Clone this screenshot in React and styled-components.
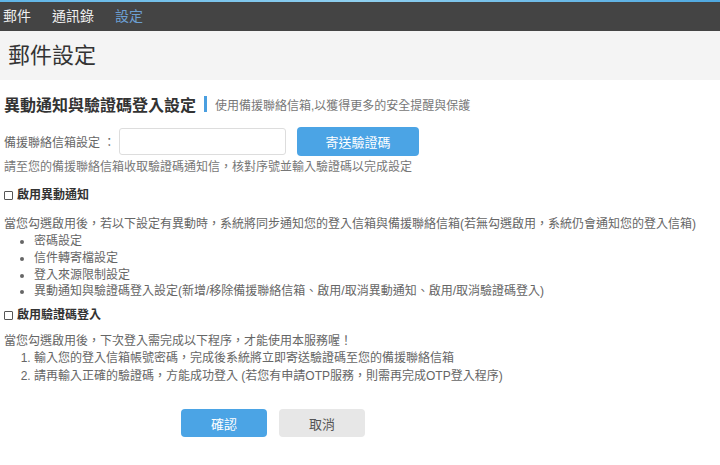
import React from "react";
import styled, { createGlobalStyle } from "styled-components";

const Global = createGlobalStyle`
  html, body { margin: 0; padding: 0; background: #fff; }
  body { font-family: "Liberation Sans", "Noto Sans CJK TC", Arial, sans-serif; color: #555; }
  * { box-sizing: border-box; }
`;

const Page = styled.div`
  width: 720px;
  min-height: 465px;
  display: flex;
  flex-direction: column;
`;

const TopLine = styled.div`
  height: 2px;
  background: linear-gradient(90deg, #5fb4e6 0%, #8fd0f0 50%, #4fa8e0 100%);
`;

const NavBar = styled.nav`
  height: 29px;
  background: #444;
  display: flex;
  align-items: center;
  gap: 21px;
  padding-left: 3px;
`;

const NavItem = styled.a`
  font-size: 14px;
  color: ${(p) => (p.$active ? "#6c9fd2" : "#f0f0f0")};
  text-decoration: none;
  line-height: 29px;
`;

const TitleBand = styled.header`
  height: 49px;
  background: #f4f4f4;
  display: flex;
  align-items: center;
  padding-left: 8px;
`;

const Title = styled.h1`
  margin: 0;
  font-size: 22px;
  font-weight: normal;
  color: #333;
  line-height: 1;
  padding-top: 1px;
`;

const Content = styled.main`
  padding: 14px 0 0 4px;
  display: flex;
  flex-direction: column;
`;

const Heading = styled.div`
  display: flex;
  align-items: center;
  height: 20px;
`;

const HeadingText = styled.h2`
  margin: 0;
  font-size: 16px;
  font-weight: bold;
  color: #333;
`;

const Bar = styled.span`
  width: 3px;
  height: 16px;
  background: #4a9fe0;
  margin: 0 8px 0 8px;
`;

const SubTitle = styled.span`
  font-size: 12px;
  color: #777;
`;

const FormRow = styled.div`
  margin-top: 13px;
  display: flex;
  align-items: center;
  height: 29px;
`;

const Label = styled.label`
  font-size: 12px;
  color: #666;
  width: 115px;
`;

const TextInput = styled.input`
  width: 167px;
  height: 27px;
  border: 1px solid #ddd;
  border-radius: 3px;
  margin-right: 11px;
  outline: none;
`;

const Button = styled.button`
  width: ${(p) => p.$w || 86}px;
  height: ${(p) => p.$h || 28}px;
  border: none;
  border-radius: 4px;
  background: ${(p) => (p.$primary ? "#4ba4e5" : "#e7e7e7")};
  color: ${(p) => (p.$primary ? "#fff" : "#555")};
  font-family: inherit;
  font-size: 13px;
  cursor: pointer;
`;

const Hint = styled.p`
  margin: 3px 0 0;
  font-size: 12px;
  line-height: 17px;
  color: #777;
`;

const CheckRow = styled.label`
  display: flex;
  align-items: center;
  margin-top: ${(p) => p.$mt}px;
  font-size: 12px;
  line-height: 17px;
  font-weight: bold;
  color: #333;
`;

const Box = styled.input`
  appearance: none;
  width: 9px;
  height: 9px;
  border: 1px solid #555;
  border-radius: 1px;
  margin: 0 4px 0 0;
  background: #fff;
`;

const Para = styled.p`
  margin: ${(p) => p.$mt}px 0 0;
  font-size: 12px;
  line-height: 17px;
  color: #666;
`;

const BulletList = styled.ul`
  margin: 0;
  padding-left: 30px;
  font-size: 12px;
  line-height: 16.8px;
  color: #666;
`;

const NumList = styled.ol`
  margin: 0;
  padding-left: 30px;
  font-size: 12px;
  line-height: 17.5px;
  color: #666;
`;

const Actions = styled.div`
  display: flex;
  gap: 12px;
  margin: 24px 0 0 177px;
`;

export default function App() {
  return (
    <Page lang="zh-Hant-TW">
      <Global />
      <TopLine />
      <NavBar>
        <NavItem>郵件</NavItem>
        <NavItem>通訊錄</NavItem>
        <NavItem $active>設定</NavItem>
      </NavBar>
      <TitleBand>
        <Title>郵件設定</Title>
      </TitleBand>
      <Content>
        <Heading>
          <HeadingText>異動通知與驗證碼登入設定</HeadingText>
          <Bar />
          <SubTitle>使用備援聯絡信箱,以獲得更多的安全提醒與保護</SubTitle>
        </Heading>
        <FormRow>
          <Label>備援聯絡信箱設定 ：</Label>
          <TextInput type="text" />
          <Button $primary $w={122} $h={29}>寄送驗證碼</Button>
        </FormRow>
        <Hint>請至您的備援聯絡信箱收取驗證碼通知信，核對序號並輸入驗證碼以完成設定</Hint>
        <CheckRow $mt={11}>
          <Box type="checkbox" />
          啟用異動通知
        </CheckRow>
        <Para $mt={12}>當您勾選啟用後，若以下設定有異動時，系統將同步通知您的登入信箱與備援聯絡信箱(若無勾選啟用，系統仍會通知您的登入信箱)</Para>
        <BulletList>
          <li>密碼設定</li>
          <li>信件轉寄檔設定</li>
          <li>登入來源限制設定</li>
          <li>異動通知與驗證碼登入設定(新增/移除備援聯絡信箱、啟用/取消異動通知、啟用/取消驗證碼登入)</li>
        </BulletList>
        <CheckRow $mt={7}>
          <Box type="checkbox" />
          啟用驗證碼登入
        </CheckRow>
        <Para $mt={9}>當您勾選啟用後，下次登入需完成以下程序，才能使用本服務喔！</Para>
        <NumList>
          <li>輸入您的登入信箱帳號密碼，完成後系統將立即寄送驗證碼至您的備援聯絡信箱</li>
          <li>請再輸入正確的驗證碼，方能成功登入 (若您有申請OTP服務，則需再完成OTP登入程序)</li>
        </NumList>
        <Actions>
          <Button $primary>確認</Button>
          <Button>取消</Button>
        </Actions>
      </Content>
    </Page>
  );
}
